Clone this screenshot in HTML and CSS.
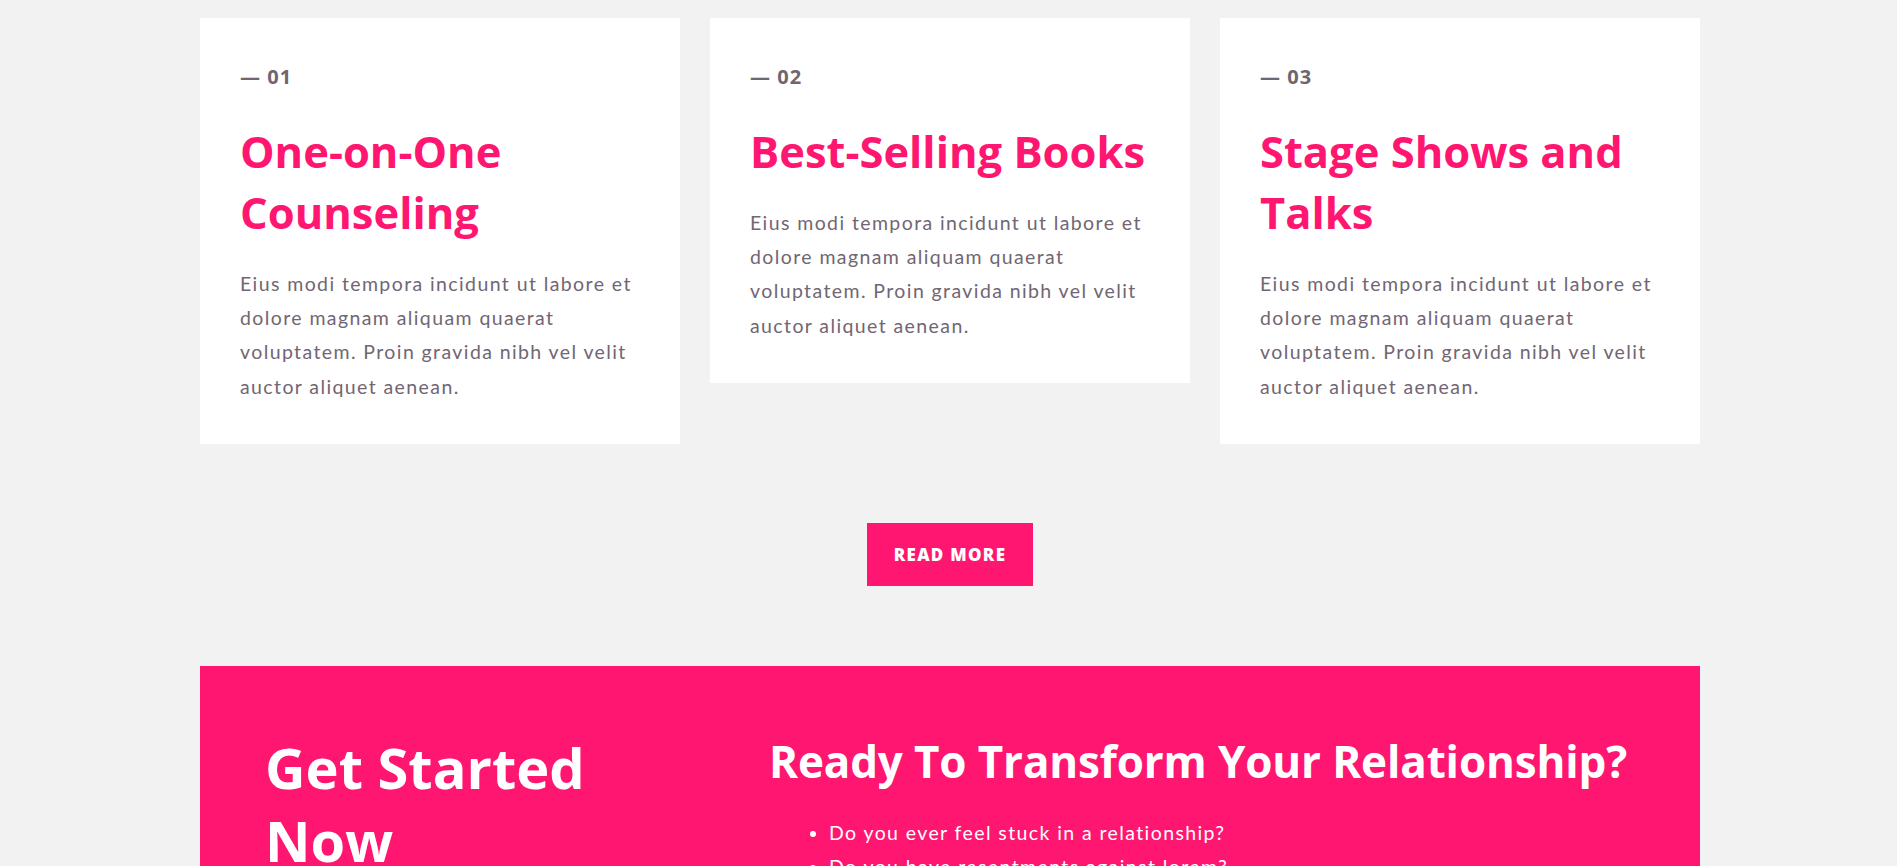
FILE: index.html
```html
<!DOCTYPE html>
<html lang="en">
<head>
  <meta charset="UTF-8" />
  <meta name="viewport" content="width=device-width, initial-scale=1" />
  <title>Services</title>
  <link rel="stylesheet" href="styles.css">
</head>
<body>
  <section class="services">
    <div class="service-list">
      <div class="service">
        <span class="service-num">— 01</span>
        <h3>One-on-One Counseling</h3>
        <p>Eius modi tempora incidunt ut labore et dolore magnam aliquam quaerat voluptatem. Proin gravida nibh vel velit auctor aliquet aenean.</p>
      </div>
      <div class="service">
        <span class="service-num">— 02</span>
        <h3>Best-Selling Books</h3>
        <p>Eius modi tempora incidunt ut labore et dolore magnam aliquam quaerat voluptatem. Proin gravida nibh vel velit auctor aliquet aenean.</p>
      </div>
      <div class="service">
        <span class="service-num">— 03</span>
        <h3>Stage Shows and Talks</h3>
        <p>Eius modi tempora incidunt ut labore et dolore magnam aliquam quaerat voluptatem. Proin gravida nibh vel velit auctor aliquet aenean.</p>
      </div>
    </div>
    <div class="more">
      <a class="btn" href="#">Read More</a>
    </div>
  </section>

  <section class="cta">
    <div class="cta-left">
      <h2>Get Started Now</h2>
    </div>
    <div class="cta-right">
      <h3>Ready To Transform Your Relationship?</h3>
      <ul>
        <li>Do you ever feel stuck in a relationship?</li>
        <li>Do you have resentments against lorem?</li>
        <li>Do you want to feel closer to your partner?</li>
      </ul>
    </div>
  </section>
</body>
</html>
```

FILE: styles.css
```css
body {
  margin: 0;
  padding: 0 0 0 3px;
  background: #f2f2f2;
  font-family: Lato, 'Open Sans', sans-serif;
  color: #716673;
}
.services {
  width: 1500px;
  margin: 18px auto 0;
}
.service-list {
  display: grid;
  grid-template-columns: repeat(3, 1fr);
  gap: 30px;
  align-items: start;
}
.service {
  background: #fff;
  padding: 45px 40px 40px;
}
.service-num {
  display: block;
  font-family: 'Open Sans', sans-serif;
  font-weight: 700;
  font-size: 20px;
  line-height: 28px;
  letter-spacing: 1px;
  color: #6e6670;
}
.service h3 {
  margin: 30px 0 0;
  font-family: 'Open Sans', sans-serif;
  font-weight: 700;
  font-size: 43.5px;
  line-height: 61px;
  color: #ff1670;
}
.service p {
  margin: 24px 0 0;
  font-size: 19.5px;
  line-height: 34.2px;
  letter-spacing: 1.4px;
}
.more {
  display: flex;
  justify-content: center;
  margin-top: 79px;
}
.btn {
  display: block;
  background: #ff1670;
  color: #fff;
  text-decoration: none;
  text-transform: uppercase;
  font-family: 'Open Sans', sans-serif;
  font-weight: 800;
  font-size: 17px;
  line-height: 21px;
  letter-spacing: 1.3px;
  padding: 21px 27px;
}
.cta {
  width: 1500px;
  box-sizing: border-box;
  margin: 80px auto 0;
  padding: 65px 40px 60px 65px;
  background: #ff1670;
  color: #fff;
  display: grid;
  grid-template-columns: 400px 1fr;
  gap: 104px;
}
.cta h2 {
  margin: 0;
  font-family: 'Open Sans', sans-serif;
  font-weight: 700;
  font-size: 56px;
  line-height: 1.3;
}
.cta h3 {
  margin: 2px 0 0;
  font-family: 'Open Sans', sans-serif;
  font-weight: 700;
  font-size: 44px;
  line-height: 1.3;
  letter-spacing: -0.15px;
}
.cta ul {
  margin: 26px 0 0;
  padding-left: 60px;
  font-size: 19.5px;
  line-height: 34.2px;
  letter-spacing: 1.4px;
}
```
